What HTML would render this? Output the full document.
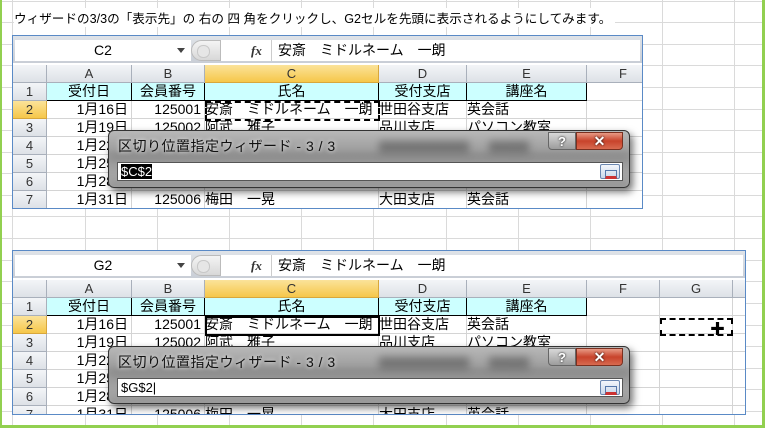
<!DOCTYPE html>
<html><head><meta charset="utf-8"><style>
*{margin:0;padding:0;box-sizing:border-box}
body{width:765px;height:428px;overflow:hidden;position:relative;background:#fff;font-family:"Liberation Sans","Noto Sans CJK JP",sans-serif;}
.vl{position:absolute;top:0;width:1px;height:428px;background:#dadada}
.hl{position:absolute;left:0;width:765px;height:1px;background:#dadada}
.gb{position:absolute;background:#92d050}
.top{position:absolute;left:14px;top:8px;font-size:12.6px;color:#000;white-space:nowrap;background:#fff;padding-right:4px}
.win{position:absolute;left:12px;border:1px solid #5a8ac6;background:#fff;overflow:hidden}
.fbar{position:absolute;left:0;top:0;right:0;height:27px;background:linear-gradient(#dfe3e8,#c9ced6)}
.nb{position:absolute;left:2px;top:4px;width:176px;height:21px;background:#fff;font-size:14px;text-align:center;line-height:21px;color:#000}
.arr{position:absolute;left:164px;top:12px;border-left:4px solid transparent;border-right:4px solid transparent;border-top:5px solid #444}
.ell{position:absolute;left:178px;top:4px;width:30px;height:21px;border-radius:11px 0 0 11px;background:linear-gradient(#f4f4f4,#d8d8d8);border:1px solid #bbb}
.ell:after{content:"";position:absolute;left:5px;top:4px;width:11px;height:11px;border-radius:6px;background:#e6e6e6;border:1px solid #c8c8c8}
.fxa{position:absolute;left:208px;top:4px;width:50px;height:21px;background:#fff}
.fx{position:absolute;left:238px;top:4px;font:italic bold 13px "Liberation Serif",serif;color:#333;line-height:21px}
.ftx{position:absolute;left:258px;top:4px;right:2px;height:21px;background:#fff;border-left:1px solid #ccc;font-size:14px;line-height:21px;padding-left:6px;white-space:pre}
.grid{position:absolute;left:0;top:29px}
.c{position:absolute;height:18px;border-right:1px solid #d4d4d4;border-bottom:1px solid #d4d4d4;font-size:14px;line-height:17px;white-space:pre;overflow:hidden;color:#000}
.h{background:linear-gradient(#f3f5f8,#dde1e7);color:#333;text-align:center;border-color:#a9b0bb;font-size:13px}
.hs{background:linear-gradient(#fbe39a,#f6c74a);border-color:#d8a73c}
.cy{background:#ccffff;border-color:#000;text-align:center}
.r{text-align:right;padding-right:3px}
.dlg{position:absolute;left:108px;width:522px;height:58px;border:1px solid #333;border-radius:6px;
background:linear-gradient(#b8b8b8,#9a9a9a 40%,#a8a8a8);box-shadow:3px 4px 8px rgba(0,0,0,.55);overflow:hidden}
.blur{position:absolute;background:#555;filter:blur(4px);opacity:.6}
.dt{position:absolute;left:9px;top:5px;font-size:14px;letter-spacing:.5px;color:#111;text-shadow:0 0 4px #fff}
.inp{position:absolute;left:8px;top:31px;width:506px;height:19px;background:#fff;border:1px solid #555;font-size:13px;line-height:17px;padding-left:3px}
.sel{background:#000;color:#fff}
.rb{position:absolute;right:2px;top:1px;width:20px;height:15px;border:1px solid #6b87b0;background:linear-gradient(#f3f6fb,#c9d7ea);border-radius:2px}
.rb:after{content:"";position:absolute;left:4px;top:5px;width:10px;height:5px;border:1px solid #5577aa;border-bottom:3px solid #c33}
.hb{position:absolute;left:439px;top:1px;width:28px;height:18px;background:linear-gradient(#d8d8d8,#9c9c9c);border:1px solid #666;border-radius:0 0 0 4px;text-align:center;color:#fff;font:bold 13px "Liberation Sans",sans-serif;line-height:17px;text-shadow:0 0 2px #000}
.cb{position:absolute;left:467px;top:1px;width:47px;height:18px;background:linear-gradient(#e89a85,#c8432b 50%,#d86a50);border:1px solid #7a3020;border-radius:0 0 4px 0;text-align:center;color:#fff;font:bold 14px "Liberation Sans",sans-serif;line-height:17px;text-shadow:0 0 2px #000}
</style></head><body>
<div id="bgl"></div>
<div class="top">ウィザードの3/3の「表示先」の 右の 四 角をクリックし、G2セルを先頭に表示されるようにしてみます。</div>

<div class="win" id="w1" style="top:35px;width:631px;height:174px"></div>
<div class="win" id="w2" style="top:250px;width:734px;height:165px"></div>

<div class="gb" style="left:0;top:0;width:2px;height:428px"></div>
<div class="gb" style="left:762px;top:0;width:3px;height:428px"></div>
<div class="gb" style="left:0;top:425px;width:765px;height:3px"></div>

<script>
var b=document.body;
var bg=document.getElementById('bgl');
var s='';
[12,85,157,229,301,373,446,518,590,662,734].forEach(function(x){s+='<div class="vl" style="left:'+x+'px"></div>'});
for(var y=0.5;y<428;y+=21.6){s+='<div class="hl" style="top:'+Math.round(y)+'px"></div>'}
bg.innerHTML=s;
var cols=[[0,34],[34,85],[119,73],[192,174],[366,88],[454,120],[574,73],[647,73],[720,20]];
var L=['','A','B','C','D','E','F','G',''];
var rows=[['受付日','会員番号','氏名','受付支店','講座名'],
['1月16日','125001','安斎　ミドルネーム　一朗','世田谷支店','英会話'],
['1月19日','125002','阿武　雅子','品川支店','パソコン教室'],
['1月22日','125003','','',''],
['1月25日','125004','','',''],
['1月28日','125005','','',''],
['1月31日','125006','梅田　一晃','大田支店','英会話']];
function build(id,name,g){
 var h='<div class="fbar"><div class="nb">'+name+'</div><div class="arr"></div><div class="ell"></div><div class="fxa"></div><div class="fx">fx</div><div class="ftx">安斎　ミドルネーム　一朗</div></div><div class="grid">';
 for(var i=0;i<cols.length;i++){var c=cols[i];h+='<div class="c h'+(i==3?' hs':'')+'" style="left:'+c[0]+'px;top:0;width:'+c[1]+'px">'+L[i]+'</div>';}
 for(var r=0;r<7;r++){var t=18+r*18;
  h+='<div class="c h'+(r==1?' hs':'')+'" style="left:0;top:'+t+'px;width:34px">'+(r+1)+'</div>';
  for(var i=1;i<cols.length;i++){var c=cols[i];var v=(i<=5?rows[r][i-1]:'');
   var cls='c';if(r==0&&i<=5)cls+=' cy';else if(i<=2)cls+=' r';
   h+='<div class="'+cls+'" style="left:'+c[0]+'px;top:'+t+'px;width:'+c[1]+'px">'+v+'</div>';}
 }
 if(g){h+='<div style="position:absolute;left:647px;top:38px;width:73px;height:18px;border:2px dashed #000"></div><div style="position:absolute;left:697px;top:38px;font-size:15px;font-weight:bold">✚</div>'+
  '<div style="position:absolute;left:192px;top:36px;width:175px;height:20px;border:2px solid #000"></div>';}
 else{h+='<div style="position:absolute;left:192px;top:36px;width:175px;height:20px;border:2px dashed #000"></div>';}
 h+='</div>';
 document.getElementById(id).innerHTML=h;
}
build('w1','C2',0);build('w2','G2',1);
function dlg(top,val,sel){
 var d=document.createElement('div');d.className='dlg';d.style.top=top+'px';
 d.innerHTML='<div class="blur" style="left:270px;top:10px;width:90px;height:12px"></div><div class="blur" style="left:380px;top:10px;width:40px;height:12px"></div><div class="blur" style="left:0;top:24px;width:520px;height:5px;opacity:.35"></div><div class="blur" style="left:0;top:52px;width:520px;height:5px;opacity:.35"></div>'+
 '<div class="dt">区切り位置指定ウィザード - 3 / 3</div><div class="hb">?</div><div class="cb">✕</div>'+
 '<div class="inp">'+(sel?'<span class="sel">'+val+'</span>':val+'|')+'<div class="rb"></div></div>';
 b.appendChild(d);
}
dlg(130,'$C$2',1);dlg(346,'$G$2',0);
</script>
</body></html>
